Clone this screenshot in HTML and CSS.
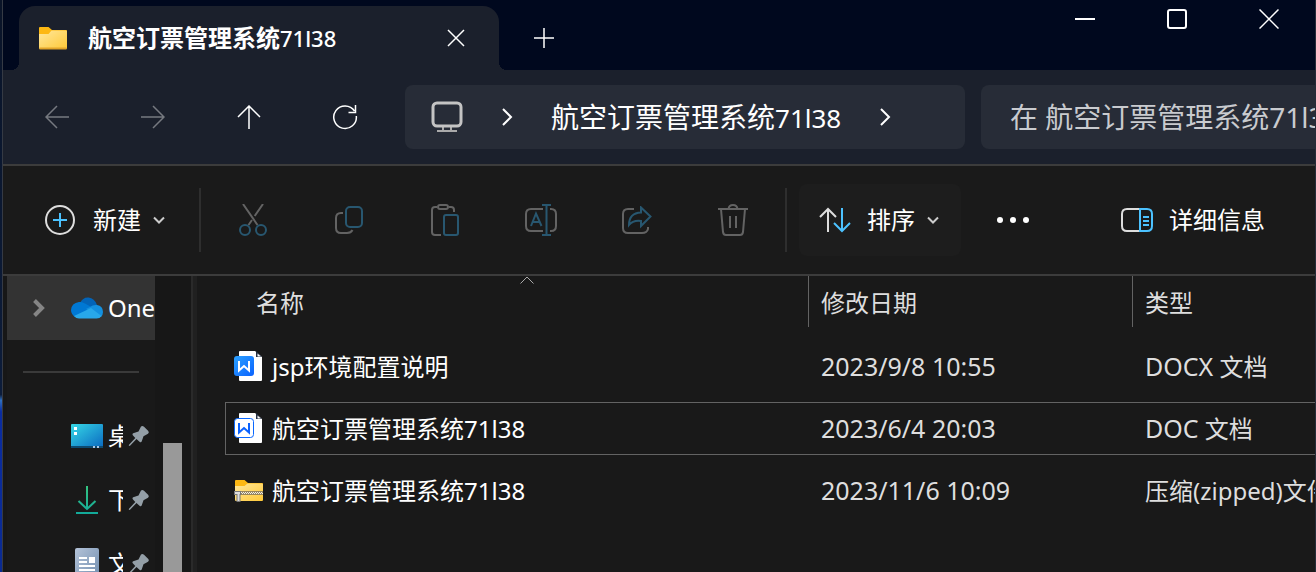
FILE: index.html
```
<!DOCTYPE html>
<html lang="zh-CN">
<head>
<meta charset="utf-8">
<title>航空订票管理系统71l38</title>
<link rel="stylesheet" href="styles.css">
</head>
<body>
<svg class="defs" width="0" height="0" aria-hidden="true">
  <defs>
    <linearGradient id="folder" x1="0" y1="0" x2="1" y2="1"><stop offset="0" stop-color="#ffe79b"/><stop offset="1" stop-color="#ffc938"/></linearGradient>
    <linearGradient id="desk" x1="0" y1="0" x2="1" y2="1"><stop offset="0" stop-color="#36d8e6"/><stop offset="1" stop-color="#0a68c0"/></linearGradient>
    <linearGradient id="down" x1="0" y1="0" x2="0" y2="28" gradientUnits="userSpaceOnUse"><stop offset="0" stop-color="#35c481"/><stop offset="1" stop-color="#12a99a"/></linearGradient>
    <linearGradient id="paper" x1="0" y1="0" x2="1" y2="1"><stop offset="0" stop-color="#b4c3d8"/><stop offset="1" stop-color="#6f8cae"/></linearGradient>
    <linearGradient id="word" x1="0" y1="0" x2="1" y2="1"><stop offset="0" stop-color="#2ca2ff"/><stop offset="1" stop-color="#0a62ff"/></linearGradient>
    <symbol id="pin" viewBox="0 0 22 22"><path d="M13 1.500Q14.500 .300 16 1.800L20.300 6Q21.500 7.500 20 8.700L15.500 11.200L13.700 16.500Q12.800 18 11.500 16.800L8.500 14L2 20.800L.800 21L1 19.800L7.300 13L4.800 10.300Q3.800 9 5.200 8.300L10.500 6.500Z" fill="#949fa7"/></symbol>
  </defs>
</svg>
<div class="desktop">
<main class="window">
  <header class="titlebar">
    <div class="tab">
      <svg class="folder" width="28" height="24" viewBox="0 0 28 24"><path d="M0 2Q0 1 1 1H9.500L13 4H27Q28 4 28 5V9H0Z" fill="#fdb813"/><path d="M0 8H9.500L12.500 4.500H27Q28 4.500 28 5.500V22Q28 23 27 23H1Q0 23 0 22Z" fill="url(#folder)"/><path d="M.500 22.500H27.500" stroke="#e2a52a"/></svg>
      <h1 class="tab-title">航空订票管理系统<span class="tab-latin">71l38</span></h1>
      <button class="plain tab-close" aria-label="关闭标签页"><svg class="thin" width="18" height="18" viewBox="0 0 18 18"><path d="M1 1L17 17M17 1L1 17"/></svg></button>
    </div>
    <button class="plain tab-add" aria-label="新建标签页"><svg class="thin" width="20" height="20" viewBox="0 0 20 20"><path d="M10 0V20M0 10H20"/></svg></button>
    <div class="captions">
      <button class="plain caption" aria-label="最小化"><svg width="20" height="20" viewBox="0 0 20 20"><path d="M0 10H20" stroke-width="2"/></svg></button>
      <button class="plain caption" aria-label="最大化"><svg width="20" height="20" viewBox="0 0 20 20"><rect x="1" y="1" width="18" height="18" rx="2" stroke-width="2"/></svg></button>
      <button class="plain caption" aria-label="关闭"><svg class="thin" width="20" height="20" viewBox="0 0 20 20"><path d="M.500 .500L19.500 19.500M19.500 .500L.500 19.500"/></svg></button>
    </div>
  </header>

  <nav class="navbar">
    <div class="nav-buttons">
      <button class="plain nav-button dim" aria-label="后退"><svg class="thin" width="24" height="24" viewBox="0 0 24 24"><path d="M24 12H1M12 1L1 12L12 23"/></svg></button>
      <button class="plain nav-button dim" aria-label="前进"><svg class="thin" width="24" height="24" viewBox="0 0 24 24"><path d="M0 12H23M12 1L23 12L12 23"/></svg></button>
      <button class="plain nav-button" aria-label="向上"><svg class="thin" width="24" height="24" viewBox="0 0 24 24"><path d="M12 24V1M1 12L12 1L23 12"/></svg></button>
      <button class="plain nav-button" aria-label="刷新"><svg class="thin" width="26" height="26" viewBox="0 0 26 26"><path d="M22.500 7A11.300 11.300 0 1 0 24.300 12M23.500 1V8.500H16.500"/></svg></button>
    </div>
    <div class="fields">
      <div class="address">
        <svg class="monitor" width="32" height="32" viewBox="0 0 32 32"><path d="M12 25V30M20 25V30M6 30H26" stroke="#aaa" stroke-width="2"/><rect x="2" y="2" width="28" height="23" rx="4"/></svg>
        <svg class="crumb" width="12" height="18" viewBox="0 0 12 18"><path d="M2 1L10 9L2 17"/></svg>
        <a class="crumb-text" href="#">航空订票管理系统<span class="crumb-latin">71l38</span></a>
        <svg class="crumb" width="12" height="18" viewBox="0 0 12 18"><path d="M2 1L10 9L2 17"/></svg>
      </div>
      <input class="search" type="text" aria-label="搜索" placeholder="在 航空订票管理系统71l38 中搜索">
    </div>
  </nav>

  <section class="commands" aria-label="命令">
    <button class="plain new-button">
      <svg width="30" height="30" viewBox="0 0 30 30"><circle cx="15" cy="15" r="14" stroke="#ddd"/><path d="M15 8V22M8 15H22" stroke="#4cc2ff"/></svg>
      <span>新建</span>
      <svg class="chevron" width="12" height="8" viewBox="0 0 12 8"><path d="M1 1.500L6 6.500L11 1.500"/></svg>
    </button>
    <span class="separator"></span>
    <div class="tools">
      <button class="plain tool" aria-label="剪切"><svg width="28" height="32" viewBox="0 0 28 32"><path d="M4 0L18.500 21M24 0L15.700 12M13 16L9.500 21"/><g class="accent"><circle cx="6" cy="26" r="5"/><circle cx="22" cy="26" r="5"/></g></svg></button>
      <button class="plain tool" aria-label="复制"><svg width="28" height="28" viewBox="0 0 28 28"><path d="M8 7H6Q1 7 1 12V22Q1 27 6 27H12Q16 27 17.500 24"/><rect class="accent" x="11" y="1" width="16" height="20" rx="4"/></svg></button>
      <button class="plain tool" aria-label="粘贴"><svg width="28" height="32" viewBox="0 0 28 32"><path d="M6 3H4Q1 3 1 6V28Q1 31 4 31H10M18 3H20Q23 3 23 6V8"/><rect x="7" y="1" width="10" height="4" rx="2"/><rect class="accent" x="13" y="11" width="14" height="20" rx="2"/></svg></button>
      <button class="plain tool" aria-label="重命名"><svg width="32" height="32" viewBox="0 0 32 32"><path d="M18 5H6Q1 5 1 10V22Q1 27 6 27H18M25 5H26Q31 5 31 10V22Q31 27 26 27H25"/><path class="accent" d="M17 1H26M17 31H26M21.500 1V31M6 22L11 9.500L16.500 22M8 18H14.500"/></svg></button>
      <button class="plain tool" aria-label="共享"><svg width="30" height="28" viewBox="0 0 30 28"><path d="M12 3H6Q1 3 1 8V22Q1 27 6 27H20Q25 27 26 23V21"/><path class="accent" d="M19 1.500L28.500 10.500L19 20V15Q11 14 7 19Q7 7 19 6.500Z"/></svg></button>
      <button class="plain tool" aria-label="删除"><svg width="30" height="32" viewBox="0 0 30 32"><path d="M0 5H30M10.500 5Q11 1 15 1T19.500 5M3 5L5 28Q5.500 31 8 31H22Q24.500 31 25 28L27 5M12 12V24M18 12V24"/></svg></button>
    </div>
    <span class="separator"></span>
    <button class="plain sort-button">
      <svg width="32" height="26" viewBox="0 0 32 26"><path d="M9 25V2M1 10L9 2L17 10" stroke="#ddd"/><path d="M23 1V24M15 16L23 24L31 16" stroke="#4cc2ff"/></svg>
      <span>排序</span>
      <svg class="chevron" width="12" height="8" viewBox="0 0 12 8"><path d="M1 1.500L6 6.500L11 1.500"/></svg>
    </button>
    <button class="plain more-button" aria-label="更多"><svg width="32" height="6" viewBox="0 0 32 6"><g fill="#fff" stroke="none"><circle cx="3" cy="3" r="3"/><circle cx="16" cy="3" r="3"/><circle cx="29" cy="3" r="3"/></g></svg></button>
    <button class="plain details-button">
      <svg width="32" height="24" viewBox="0 0 32 24"><path d="M19 1H6Q1 1 1 6V18Q1 23 6 23H19" stroke="#ddd"/><path d="M19 1H26Q31 1 31 6V18Q31 23 26 23H19ZM22 9H28M22 13H28M22 17H28" stroke="#4cc2ff"/></svg>
      <span>详细信息</span>
    </button>
  </section>

  <div class="content">
    <aside class="sidebar">
      <div class="tree">
        <a class="tree-row onedrive" href="#">
          <svg class="expander" width="14" height="18" viewBox="0 0 14 18"><path d="M3.500 1.500L11 9L3.500 16.500" stroke="#858585" stroke-width="4"/></svg>
          <svg class="tree-icon" width="32" height="22" viewBox="0 0 32 22"><path d="M9 6Q12 0 17.500 .500Q23.500 1 26 8L17 14Z" fill="#0364b8" stroke="none"/><path d="M8 5Q11 4.500 14 6.500L24 12L4 20Q0 17 0 13Q.500 6 8 5Z" fill="#0078d4" stroke="none"/><path d="M19 10Q22 7.500 26 8Q32 9 32 15Q32 18 30 20L15 12Z" fill="#1490df" stroke="none"/><path d="M3 19L20 11L30.500 19Q29 21.500 25.500 21.500H8Q5 21.500 3 19Z" fill="#28a8ea" stroke="none"/></svg>
          <span class="tree-label wide">OneDrive</span>
        </a>
        <hr class="divider">
        <a class="tree-row" href="#">
          <svg class="tree-icon" width="32" height="24" viewBox="0 0 32 24"><g stroke="none"><rect width="32" height="24" rx="1" fill="url(#desk)"/><path d="M0 22H32V24H0Z" fill="#0c4a70"/><path d="M3 3H6V6H3ZM3 8H6V11H3Z" fill="#fff"/><path d="M22 22H24V24H22ZM26 22H28V24H26Z" fill="#a9c8e8"/></g></svg>
          <span class="tree-label">桌面</span><svg class="pin" width="22" height="22"><use href="#pin"/></svg>
        </a>
        <a class="tree-row" href="#">
          <svg class="tree-icon" width="32" height="28" viewBox="0 0 32 28"><path d="M16 0V22M7.500 15L16 23L24.500 15M5 27H27" stroke="url(#down)" stroke-width="2"/></svg>
          <span class="tree-label">下载</span><svg class="pin" width="22" height="22"><use href="#pin"/></svg>
        </a>
        <a class="tree-row" href="#">
          <svg class="tree-icon" width="32" height="32" viewBox="0 0 32 32"><g stroke="none"><rect x="4" width="24" height="32" rx="2" fill="url(#paper)"/><path d="M8 9H16V11H8ZM8 13H16V15H8ZM18 9H24V15H18ZM8 17H24V19H8ZM8 21H24V23H8Z" fill="#fff"/></g></svg>
          <span class="tree-label">文档</span><svg class="pin" width="22" height="22"><use href="#pin"/></svg>
        </a>
      </div>
      <div class="scrollbar"><div class="thumb"></div></div>
    </aside>

    <div class="files">
      <svg class="sort-mark" width="14" height="8" viewBox="0 0 14 8"><path d="M.500 7.500L7 1L13.500 7.500" stroke="#aaa" stroke-width="1"/></svg>
      <table class="file-table">
        <thead><tr class="head"><th>名称</th><th>修改日期</th><th>类型</th></tr></thead>
        <tbody>
          <tr class="file">
            <td><svg width="28" height="31" viewBox="0 0 28 31"><g stroke="none"><path d="M5 1Q5 0 6 0H21L28 6V29Q28 30 27 30H6Q5 30 5 29Z" fill="#fff"/><path d="M22 0L28 6H22Z" fill="#243044"/><path d="M23.500 2.500L27 5.500H23.500Z" fill="#fff"/><rect y="5" width="20" height="20" rx="3" fill="url(#word)"/></g><path d="M5 10V19.500L10 15L15 19.500V10" stroke="#fff"/></svg><span>jsp环境配置说明</span></td>
            <td><span class="latin">2023/9/8 10:55</span></td><td><span class="latin">DOCX</span> 文档</td>
          </tr>
          <tr class="file focused">
            <td><svg width="28" height="31" viewBox="0 0 28 31"><g stroke="none"><path d="M5 1Q5 0 6 0H21L28 6V29Q28 30 27 30H6Q5 30 5 29Z" fill="#fff"/><path d="M22 0L28 6H22Z" fill="#243044"/><path d="M23.500 2.500L27 5.500H23.500Z" fill="#fff"/></g><rect x=".5" y="5.500" width="19" height="19" rx="3" fill="#fff" stroke="#0a68ff" stroke-width="1"/><path d="M5 10V19.500L10 15L15 19.500V10" stroke="#0a62ff"/></svg><span>航空订票管理系统71l38</span></td>
            <td><span class="latin">2023/6/4 20:03</span></td><td><span class="latin">DOC</span> 文档</td>
          </tr>
          <tr class="file">
            <td><svg width="30" height="24" viewBox="0 0 30 24"><g stroke="none"><path d="M1 2Q1 1 2 1H10.500L14 4H28Q29 4 29 5V9H1Z" fill="#fdb813"/><path d="M1 7H10.500L13.500 4.500H28Q29 4.500 29 5.500V21Q29 22 28 22H2Q1 22 1 21Z" fill="url(#folder)"/><path d="M6 12H29V16H6Z" fill="#98865c"/></g><path d="M7 13.500H29M8 14.500H29" stroke="#eee" stroke-width="1" stroke-dasharray="1 1"/><path d="M0 14H7M4.500 13V23" stroke="#777" stroke-width="4"/><path d="M1 14H6M4.500 14V22" stroke="#ddd" stroke-width="2"/></svg><span class="zip-name">航空订票管理系统71l38</span></td>
            <td><span class="latin">2023/11/6 10:09</span></td><td>压缩(zipped)文件夹</td>
          </tr>
        </tbody>
      </table>
    </div>
  </div>
</main>
</div>
</body>
</html>
```
FILE: styles.css
```
* {
  box-sizing: border-box;
}

body {
  margin: 0;
  font: 24px/32px "Noto Sans", "Noto Sans CJK SC", sans-serif;
  color: #fff;
  background: #191919;
  overflow: hidden;
}

svg {
  display: block;
  flex: none;
  fill: none;
  stroke: #fff;
  stroke-width: 2;
}

.thin {
  stroke-width: 1.5;
}

.defs {
  position: absolute;
}

.pin {
  stroke: none;
}

a {
  color: inherit;
  text-decoration: none;
}

.plain {
  display: flex;
  align-items: center;
  justify-content: center;
  padding: 0;
  border: 0;
  background: none;
  color: inherit;
  font: inherit;
}

.desktop {
  min-height: 100vh;
  padding-left: 2px;
  background: linear-gradient(#0a1428 0, #0c1c3a 69%, #2f6fc0 70%, #0a2ca0 72%, #0a2a90 100%);
}

.window {
  display: flex;
  flex-direction: column;
  height: 100vh;
  border-left: 1px solid #353a44;
  border-right: 1px solid #252c38;
  background: #191919;
  overflow: hidden;
}

/* Title bar */

.titlebar {
  display: flex;
  height: 70px;
  padding: 6px 0 0 16px;
  background: #00081e;
}

.tab {
  position: relative;
  display: flex;
  align-items: center;
  width: 480px;
  padding: 0 32px 0 20px;
  border-radius: 16px 16px 0 0;
  background: #1b202c;
}

.tab::before,
.tab::after {
  content: "";
  position: absolute;
  bottom: 0;
  width: 8px;
  height: 8px;
}

.tab::before {
  right: 100%;
  background: radial-gradient(circle at 0 0, #00081e 8px, #1b202c 8px);
}

.tab::after {
  left: 100%;
  background: radial-gradient(circle at 100% 0, #00081e 8px, #1b202c 8px);
}

.folder {
  stroke: none;
}

.tab-title {
  margin: 0 auto 0 21px;
  font-size: 24px;
  font-weight: 700;
  white-space: nowrap;
}

.tab-latin {
  font-size: 22px;
  font-weight: 500;
}

.tab-close {
  width: 22px;
  height: 64px;
}

.tab-add {
  width: 90px;
}

.captions {
  display: flex;
  align-items: flex-start;
  margin-left: auto;
}

.caption {
  width: 92px;
  height: 26px;
}

/* Navigation */

.navbar {
  display: flex;
  align-items: center;
  height: 96px;
  padding-left: 6px;
  border-bottom: 2px solid #3c3c3c;
  background: #1b202c;
}

.nav-buttons {
  display: flex;
  margin-right: 12px;
}

.nav-button {
  width: 96px;
  height: 64px;
}

.dim {
  opacity: 0.4;
}

.fields {
  display: grid;
  flex: 1;
  grid-template-columns: minmax(0, 560fr) minmax(0, 334fr);
  gap: 16px;
  min-width: 0;
}

.address,
.search {
  min-width: 0;
  height: 64px;
  background: #272c37;
  font-size: 28px;
}

.address {
  display: flex;
  align-items: center;
  padding-left: 26px;
  border-radius: 8px;
  overflow: hidden;
}

.monitor {
  stroke: #c4c4c4;
  stroke-width: 3;
}

.crumb {
  margin: 0 38px;
}

.crumb-text {
  white-space: nowrap;
}

.crumb-latin {
  font-size: 26px;
}

.search {
  width: 100%;
  padding: 0 0 0 29px;
  border: 0;
  border-radius: 8px 0 0 8px;
  color: #fff;
  font-family: inherit;
}

.search::placeholder {
  color: #c9cbcf;
  opacity: 1;
}

/* Command bar */

.commands {
  display: flex;
  align-items: center;
  height: 110px;
  border-bottom: 2px solid #3c3c3c;
  background: #1a1a1a;
}

.new-button {
  width: 196px;
  height: 72px;
  padding-left: 42px;
  justify-content: flex-start;
}

.new-button span {
  margin: 0 12px 0 18px;
}

.chevron {
  stroke: #ccc;
}

.separator {
  width: 2px;
  height: 64px;
  background: #2e2e2e;
}

.tools {
  display: flex;
  margin: 0 4px;
}

.tool {
  width: 96px;
  height: 72px;
}

.tool svg {
  stroke: #636363;
}

.tool .accent {
  stroke: #285770;
}

.sort-button {
  width: 162px;
  height: 72px;
  margin: 0 4px 0 12px;
  padding-right: 2px;
  border-radius: 8px;
  background: #1d1d1d;
}

.sort-button span {
  margin: 0 12px 0 16px;
}

.more-button {
  width: 96px;
  height: 72px;
}

.details-button {
  gap: 16px;
  height: 72px;
  margin-left: auto;
  padding-right: 50px;
}

/* Content */

.content {
  display: flex;
  flex: 1;
  min-height: 0;
}

.sidebar {
  display: flex;
  flex: none;
  width: 194px;
  padding-left: 4px;
  border-right: 4px solid #202020;
  background: #171717;
  box-shadow: inset -2px 0 #2a2a2a;
}

.tree {
  width: 148px;
  background: #191919;
}

.tree-row {
  display: flex;
  align-items: center;
  height: 64px;
  padding-left: 64px;
}

.onedrive {
  padding-left: 24px;
  background: #333;
}

.expander {
  margin-right: 26px;
}

.tree-label {
  width: 15px;
  margin: 0 5px;
  overflow: hidden;
  white-space: nowrap;
}

.wide {
  width: 47px;
  margin-right: 0;
}

.divider {
  height: 2px;
  margin: 31px 16px;
  border: 0;
  background: #3a3a3a;
}

.scrollbar {
  display: flex;
  align-items: flex-end;
  margin-left: 8px;
}

.thumb {
  width: 19px;
  height: calc(100% - 167px);
  background: #999;
}

.files {
  position: relative;
  flex: 1;
  min-width: 0;
  padding-left: 28px;
  overflow: hidden;
}

.sort-mark {
  position: absolute;
  top: 0;
  left: 323px;
}

.file-table,
.file-table thead {
  display: block;
}

.file-table tbody {
  display: flex;
  flex-direction: column;
  gap: 9px;
  margin-top: 13px;
}

.head,
.file {
  display: grid;
  grid-template-columns: 584px 324px 1fr;
}

.head th {
  height: 51px;
  padding: 11px 12px 8px;
  border-right: 1px solid #636363;
  color: #dedede;
  font-weight: 400;
  text-align: left;
}

.head th:first-child {
  padding-left: 31px;
}

.head th:last-child {
  border-right: 0;
}

.file {
  align-items: center;
  height: 53px;
  border: 1px solid transparent;
}

.focused {
  border-color: #636363;
  border-right: 0;
}

.latin {
  font-size: 25px;
}

.file td {
  padding: 0 11px;
  color: #dedede;
  white-space: nowrap;
}

.file td:first-child {
  display: flex;
  align-items: center;
  gap: 10px;
  padding-left: 8px;
  color: #fff;
}

.file .zip-name {
  margin-left: -2px;
}
```
